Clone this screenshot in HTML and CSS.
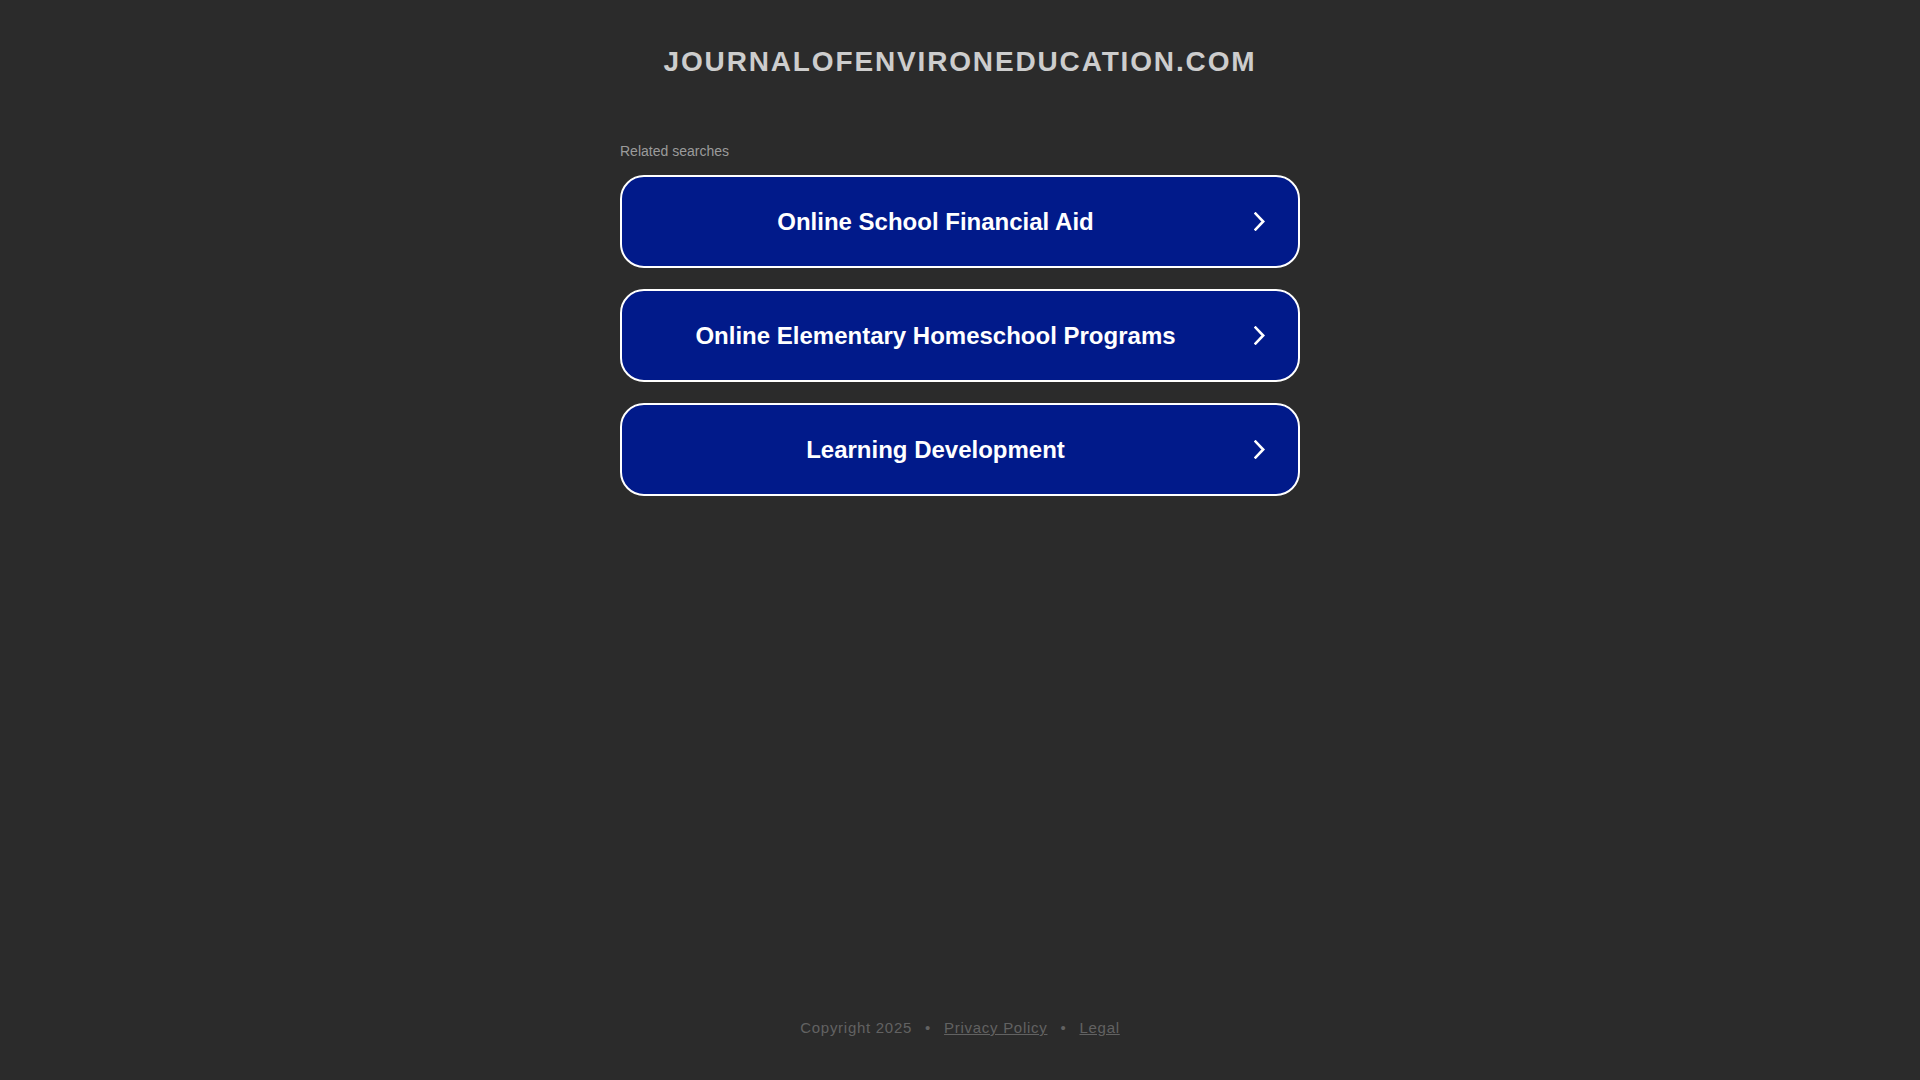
FILE: index.html
```html
<!DOCTYPE html>
<html lang="en">
<head>
<meta charset="utf-8">
<title>journalofenvironeducation.com</title>
<link rel="stylesheet" href="styles.css">
</head>
<body>
<div class="page">
  <header class="header">
    <h1 class="domain">JOURNALOFENVIRONEDUCATION.COM</h1>
  </header>
  <main class="content">
    <div class="related-label">Related searches</div>
    <ul class="links">
      <li><a class="link-btn" href="#"><span class="link-text">Online School Financial Aid</span><svg class="chev" viewBox="0 0 11 19" width="11" height="19"><path d="M1.6 1.6 L9.2 9.5 L1.6 17.4" fill="none" stroke="#fff" stroke-width="2.6" stroke-linecap="square" stroke-linejoin="miter"/></svg></a></li>
      <li><a class="link-btn" href="#"><span class="link-text">Online Elementary Homeschool Programs</span><svg class="chev" viewBox="0 0 11 19" width="11" height="19"><path d="M1.6 1.6 L9.2 9.5 L1.6 17.4" fill="none" stroke="#fff" stroke-width="2.6" stroke-linecap="square" stroke-linejoin="miter"/></svg></a></li>
      <li><a class="link-btn" href="#"><span class="link-text">Learning Development</span><svg class="chev" viewBox="0 0 11 19" width="11" height="19"><path d="M1.6 1.6 L9.2 9.5 L1.6 17.4" fill="none" stroke="#fff" stroke-width="2.6" stroke-linecap="square" stroke-linejoin="miter"/></svg></a></li>
    </ul>
  </main>
  <footer class="footer">
    <span>Copyright 2025</span><span class="sep">•</span><a href="#">Privacy Policy</a><span class="sep">•</span><a href="#">Legal</a>
  </footer>
</div>
</body>
</html>
```

FILE: styles.css
```css
html, body {
  margin: 0;
  padding: 0;
}
body {
  background: #2b2b2b;
  font-family: "Liberation Sans", Arial, sans-serif;
}
.page {
  min-height: 100vh;
  display: flex;
  flex-direction: column;
  align-items: center;
}
.header {
  padding-top: 46px;
}
.domain {
  margin: 0;
  font-size: 28px;
  line-height: 32px;
  font-weight: bold;
  letter-spacing: 1.85px;
  color: #cdcdcd;
  text-align: center;
}
.content {
  width: 680px;
  margin-top: 65px;
}
.related-label {
  font-size: 14px;
  line-height: 16px;
  color: #9b9b9b;
}
.links {
  list-style: none;
  margin: 16px 0 0;
  padding: 0;
  display: flex;
  flex-direction: column;
  gap: 21px;
}
.link-btn {
  box-sizing: border-box;
  height: 93px;
  display: flex;
  align-items: center;
  gap: 21px;
  padding: 0 33px 0 16px;
  background: #011a8a;
  border: 2px solid #ffffff;
  border-radius: 24px;
  color: #ffffff;
  text-decoration: none;
}
.link-text {
  flex: 1;
  text-align: center;
  font-size: 24px;
  line-height: 28px;
  font-weight: bold;
}
.chev {
  flex: none;
  display: block;
}
.footer {
  margin-top: auto;
  padding-bottom: 43px;
  font-size: 15px;
  line-height: 18px;
  letter-spacing: 0.72px;
  color: #626262;
}
.footer a {
  color: #626262;
  text-decoration: underline;
}
.sep {
  margin: 0 13px;
}
```
